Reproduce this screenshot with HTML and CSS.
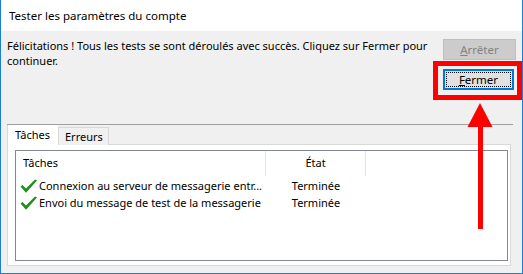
FILE: index.html
```html
<!DOCTYPE html>
<html lang="fr">
<head>
<meta charset="utf-8">
<title>Tester les paramètres du compte</title>
<link rel="stylesheet" href="styles.css">
</head>
<body>
<div class="window">
  <div class="titlebar">Tester les paramètres du compte</div>
  <div class="content">
    <div class="top">
      <p class="message">Félicitations ! Tous les tests se sont déroulés avec succès. Cliquez sur Fermer pour<br>continuer.</p>
      <div class="buttons">
        <button class="btn btn-disabled" disabled><u>A</u>rrêter</button>
        <button class="btn btn-default"><span class="focus"><u>F</u>ermer</span></button>
      </div>
    </div>
    <div class="separator"></div>
    <div class="tabs">
      <div class="tab tab-active">Tâches</div>
      <div class="tab">Erreurs</div>
    </div>
    <div class="panel">
      <div class="listview">
        <div class="lv-header">
          <div class="col col-task">Tâches</div>
          <div class="col col-state">État</div>
          <div class="col col-rest"></div>
        </div>
        <div class="lv-row">
          <div class="col col-task"><svg class="check" viewBox="0 0 17 14" width="17" height="14"><path d="M0.5 7.5 L2.5 6 L6 9.5 L15 0.5 L17 1.5 L6 13.8 Z" fill="#1e8e1e"/></svg><span>Connexion au serveur de messagerie entr...</span></div>
          <div class="col col-state">Terminée</div>
        </div>
        <div class="lv-row">
          <div class="col col-task"><svg class="check" viewBox="0 0 17 14" width="17" height="14"><path d="M0.5 7.5 L2.5 6 L6 9.5 L15 0.5 L17 1.5 L6 13.8 Z" fill="#1e8e1e"/></svg><span>Envoi du message de test de la messagerie</span></div>
          <div class="col col-state">Terminée</div>
        </div>
      </div>
    </div>
  </div>
  <div class="highlight"></div>
  <svg class="arrow" width="30" height="130" viewBox="0 0 30 130">
    <polygon points="13,0 0.5,24 25.5,24" fill="#ff0000"/>
    <rect x="11" y="22" width="5" height="104" fill="#ff0000"/>
  </svg>
</div>
</body>
</html>
```
FILE: styles.css
```css
* { box-sizing: border-box; }
html, body { margin: 0; padding: 0; background: #ffffff; }
body {
  font-family: "Noto Sans", "Liberation Sans", sans-serif;
  font-size: 11px;
  color: #000;
}
.window {
  position: relative;
  width: 523px;
  height: 274px;
  border: 1px solid #1a7fd4;
  border-top: 0;
  display: flex;
  flex-direction: column;
  background: #f0f0f0;
}
.titlebar {
  height: 31px;
  background: #ffffff;
  padding: 7px 0 0 8px;
  font-size: 11.5px;
  line-height: 17px;
  color: #000;
}
.content {
  flex: 1;
  display: flex;
  flex-direction: column;
  padding: 0 9px 0 6px;
}
.top {
  height: 93px;
  display: flex;
  justify-content: space-between;
}
.message {
  margin: 0;
  padding-top: 7px;
  line-height: 15px;
  white-space: nowrap;
  flex: none;
}
.buttons {
  flex: none;
  display: flex;
  flex-direction: column;
  align-items: flex-start;
  gap: 9px;
  padding-top: 8px;
  margin-right: -3px;
  width: 73px;
}
.btn {
  font: inherit;
  font-size: 11.5px;
  height: 21px;
  padding: 0;
  margin: 0;
  display: flex;
  align-items: center;
  justify-content: center;
  flex: none;
}
.btn-disabled {
  width: 73px;
  background: #cccccc;
  border: 1px solid #bfbfbf;
  color: #838383;
}
.btn-default {
  width: 71px;
  background: #e1e1e1;
  border: 2px solid #0078d7;
  color: #000;
  padding: 1px;
}
.focus {
  flex: 1;
  align-self: stretch;
  border: 1px dotted #000;
  display: flex;
  align-items: center;
  justify-content: center;
  line-height: 13px;
}
.separator {
  height: 1px;
  width: 506px;
  background: #a0a0a0;
}
.tabs {
  display: flex;
  align-items: flex-end;
  height: 20px;
  position: relative;
  z-index: 1;
}
.tab {
  height: 18px;
  padding: 0 5px 0 6px;
  background: #f0f0f0;
  border: 1px solid #d9d9d9;
  border-bottom: 0;
  line-height: 17px;
}
.tab-active {
  height: 20px;
  width: 51px;
  background: #ffffff;
  border-top: 0;
  border-right: 0;
  padding: 1px 0 0 7px;
  line-height: 17px;
}
.panel {
  width: 504px;
  height: 122px;
  background: #ffffff;
  border: 1px solid #d9d9d9;
  margin-top: -1px;
  padding: 5px 2px 5px 7px;
}
.listview {
  height: 111px;
  border: 1px solid #828790;
  background: #ffffff;
}
.lv-header {
  display: flex;
  height: 25px;
  align-items: stretch;
}
.lv-header .col {
  border-right: 1px solid #e5e5e5;
  line-height: 24px;
}
.lv-header .col-task { padding-left: 7px; }
.lv-header .col-rest { border-right: 0; }
.col-task { width: 250px; }
.col-state { width: 100px; text-align: center; }
.lv-row {
  display: flex;
  height: 17px;
  line-height: 17px;
}
.lv-row .col-task {
  display: flex;
  align-items: center;
  padding-left: 4px;
  white-space: nowrap;
  overflow: hidden;
}
.lv-row .col-task span { margin-left: 2px; }
.check { flex: none; }
.lv-header + .lv-row { margin-top: 1px; }
.highlight {
  position: absolute;
  left: 432px;
  top: 61px;
  width: 89px;
  height: 39px;
  border: 5px solid #ff0000;
}
.arrow {
  position: absolute;
  left: 466px;
  top: 103px;
}
```
